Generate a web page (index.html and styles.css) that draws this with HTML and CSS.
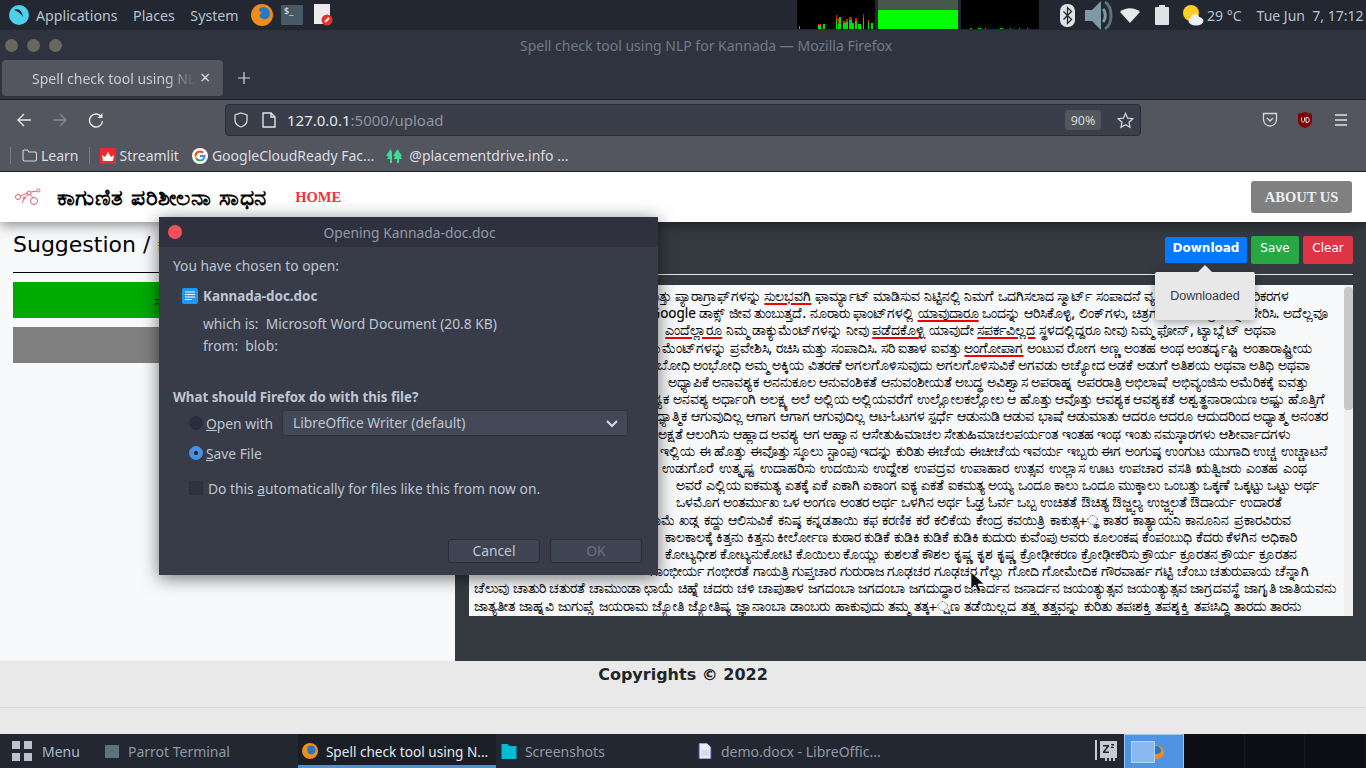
FILE: index.html
```html
<!DOCTYPE html>
<html>
<head>
	<title>Spell check tool using NLP for Kannada</title>
	<link rel="stylesheet" href="styles.css">
</head>
<body>
	<!-- desktop top panel -->
	<div class="top_panel">
		<svg class="os_logo" viewBox="0 0 20 20"><circle cx="10" cy="10" r="10" fill="#4fd0ea"/><path d="M5 5c4-2 8 0 9 7-2-3-4-5-9-7z" fill="#1d2430"/></svg>
		<span class="panel_menu">Applications</span>
		<span class="panel_menu">Places</span>
		<span class="panel_menu">System</span>
		<svg class="launcher" viewBox="0 0 22 22"><circle cx="11" cy="11" r="11" fill="#f08c1a"/><circle cx="12.500" cy="9.500" r="6.500" fill="#2478c8"/><path d="M1 9c1 7 7 10 12 9 3-1 5-3 6-5-3 3-8 3-10 0-1-2 0-3 2-4-2-1-3-2-3-5C5 5 2 6 1 9z" fill="#f08c1a"/></svg>
		<div class="term_icon">$_</div>
		<svg class="doc_icon" viewBox="0 0 20 22"><rect x="0" y="0" width="16" height="20" fill="#ebebeb"/><circle cx="13" cy="16" r="5.500" fill="#e5322d"/><path d="M11 18l4-4" stroke="#fff" stroke-width="2"/></svg>
		<div class="graphs">
			<svg class="graph" viewBox="0 0 78 29">
				<rect width="78" height="29" fill="#000"/>
				<path d="M2 29v-3h1v3zM21 29v-4h3v4zM26 29v-5h2v5zM39 29v-14h1v14zM41 29v-10h1v-2h2v12zM46 29v-6h3v6zM49 29v-7h2v7zM52 29v-9h3v9zM55 29v-6h2v6zM58 29v-8h2v8zM61 29v-5h3v5zM66 29v-14h1v14zM71 29v-8h1v8zM74 29v-6h2v6z" fill="#00e000"/>
				<path d="M21 25v-1h3v1zM39 19v-4h1v4zM41 24v-4h1v4zM46 23v-2h3v2zM49 22v-3h2v3zM52 20v-3h3v3zM58 21v-3h2v3zM66 18v-4h1v4zM71 22v-2h1v2z" fill="#e01010"/>
			</svg>
			<div class="graph mem_graph"></div>
			<svg class="graph" viewBox="0 0 78 29">
				<rect width="78" height="29" fill="#000"/>
				<path d="M9 29v-1h2v1zM17 29v-1h3v1zM24 29v-1h1v1zM39 29v-1h3v1zM49 29v-1h1v1zM58 29v-1h1v1zM66 29v-1h1v1z" fill="#00d000"/>
			</svg>
		</div>
		<svg class="tray_bt" viewBox="0 0 15 23"><rect width="15" height="23" rx="7" fill="#dfe3e6"/><path d="M3.500 7.500l8 8-4 4V3.500l4 4-8 8" fill="none" stroke="#222731" stroke-width="1.300"/></svg>
		<svg class="tray_vol" viewBox="0 0 29 31"><path d="M0 10h7l9-9v29l-9-9H0z" fill="#7f98a5"/><path d="M18 9c3 3 3 10 0 13" fill="none" stroke="#7f98a5" stroke-width="3"/><path d="M20 2c8 5 8 22 0 27" fill="none" stroke="#5e717c" stroke-width="3"/></svg>
		<svg class="tray_wifi" viewBox="0 0 20 15"><path d="M0 4c5-5 15-5 20 0L10 15z" fill="#e6e9eb"/></svg>
		<svg class="tray_bat" viewBox="0 0 14 20"><rect x="4" y="0" width="6" height="2" fill="#dfe3e6"/><rect x="0" y="2" width="14" height="18" rx="1" fill="#dfe3e6"/></svg>
		<svg class="tray_sun" viewBox="0 0 22 22"><circle cx="9" cy="9" r="8" fill="#fbcf24"/><ellipse cx="14" cy="17" rx="7.500" ry="4.500" fill="#eceff1"/><circle cx="13" cy="14" r="4" fill="#eceff1"/></svg>
		<span class="panel_temp">29 °C</span>
		<span class="panel_clock">Tue Jun&nbsp; 7, 17:12</span>
	</div>

	<!-- firefox chrome -->
	<div class="title_bar">
		<span class="win_dot"></span><span class="win_dot"></span><span class="win_dot"></span>
		<span class="title_text">Spell check tool using NLP for Kannada — Mozilla Firefox</span>
	</div>
	<div class="tab_row">
		<div class="tab"><span class="tab_text">Spell check tool using NLP for Kannada</span><span class="tab_close">×</span></div>
		<svg class="new_tab" viewBox="0 0 12 12"><path d="M6 0v12M0 6h12" stroke="#d5d7db" stroke-width="1.200"/></svg>
	</div>
	<div class="nav_row">
		<svg class="nav_icon" viewBox="0 0 16 16"><path d="M15 8H2M8 2L2 8l6 6" fill="none" stroke="#e2e4e8" stroke-width="1.400"/></svg>
		<svg class="nav_icon dim" viewBox="0 0 16 16"><path d="M1 8h13M8 2l6 6-6 6" fill="none" stroke="#8a8c95" stroke-width="1.400"/></svg>
		<svg class="nav_icon" viewBox="0 0 16 16"><path d="M13.500 5A6.500 6.500 0 1 0 14.500 9" fill="none" stroke="#e2e4e8" stroke-width="1.500"/><path d="M14.500 1v5h-5z" fill="#e2e4e8"/></svg>
		<div class="url_bar">
			<svg class="url_icon" viewBox="0 0 16 16"><path d="M8 1l6 2v5c0 4-3 6-6 7-3-1-6-3-6-7V3z" fill="none" stroke="#d5d7db" stroke-width="1.300"/></svg>
			<svg class="url_icon url_page" viewBox="0 0 14 16"><path d="M1 1h8l4 4v10H1z" fill="none" stroke="#e2e4e8" stroke-width="1.400"/><path d="M9 1v4h4" fill="none" stroke="#e2e4e8" stroke-width="1.400"/></svg>
			<span class="url_host">127.0.0.1</span><span class="url_rest">:5000/upload</span>
			<span class="zoom_chip">90%</span>
			<svg class="url_star" viewBox="0 0 18 18"><path d="M9 1.500l2.300 5 5.400.6-4 3.700 1.100 5.400L9 13.500l-4.800 2.700 1.100-5.400-4-3.700 5.400-.6z" fill="none" stroke="#d5d7db" stroke-width="1.300"/></svg>
		</div>
		<svg class="pocket" viewBox="0 0 16 16"><path d="M1.500 1.500h13v6a6.500 6.500 0 0 1-13 0z" fill="none" stroke="#d5d7db" stroke-width="1.300"/><path d="M5 6l3 3 3-3" fill="none" stroke="#d5d7db" stroke-width="1.300"/></svg>
		<svg class="ublock" viewBox="0 0 14 16"><path d="M7 0l7 2v7c0 3-3 6-7 7-4-1-7-4-7-7V2z" fill="#800000"/><path d="M3.500 5.500v3c0 2 3 2 3 0v-3M8 5.500v5h1c3 0 3-5 0-5z" fill="none" stroke="#eee" stroke-width="1"/></svg>
		<svg class="burger" viewBox="0 0 14 12"><path d="M1 1h12M1 6h12M1 11h12" stroke="#e2e4e8" stroke-width="1.300"/></svg>
	</div>
	<div class="bookmark_row">
		<span class="bm_sep"></span>
		<svg class="bm_folder" viewBox="0 0 15 13"><path d="M1 2.500c0-1 .5-1.500 1.500-1.500h3l1.500 2h6c1 0 1.500.5 1.500 1.500v6c0 1-.5 1.500-1.500 1.500h-10C1.500 12 1 11.500 1 10.500z" fill="none" stroke="#d5d7db" stroke-width="1.100"/></svg>
		<span class="bm_text">Learn</span>
		<span class="bm_sep"></span>
		<svg class="bm_icon" viewBox="0 0 16 16"><rect width="16" height="16" fill="#f0282d"/><path d="M2 7l3 2 3-5 3 5 3-2-1 6H3z" fill="#fff"/></svg>
		<span class="bm_text">Streamlit</span>
		<svg class="bm_icon gap_g" viewBox="0 0 16 16"><circle cx="8" cy="8" r="8" fill="#fff"/><path d="M3.500 8a4.500 4.500 0 0 1 7.500-3.300" fill="none" stroke="#ea4335" stroke-width="2"/><path d="M3.500 8c0 1 .3 1.700.7 2.400" fill="none" stroke="#fbbc05" stroke-width="2"/><path d="M4.200 10.400a4.500 4.500 0 0 0 6.800 1" fill="none" stroke="#34a853" stroke-width="2"/><path d="M11 11.400c1-.8 1.500-2 1.500-3.400H8" fill="none" stroke="#4285f4" stroke-width="2"/></svg>
		<span class="bm_text">GoogleCloudReady Fac...</span>
		<svg class="bm_icon gap_t" viewBox="0 0 16 16"><path d="M4.500 1L0 8h2.500L1 11h3v4h2V4zM11.500 1L7 8h2L8 11h3v4h2v-4h3l-1.500-3H16z" fill="#3ddc97"/></svg>
		<span class="bm_text">@placementdrive.info ...</span>
	</div>

	<!-- the page -->
	<div class="site_page">
		<div class="site_nav">
			<svg class="site_logo" viewBox="0 0 26 18"><g fill="none" stroke="#e0606a" stroke-width="1"><circle cx="3" cy="9" r="2.500"/><circle cx="9" cy="10" r="1"/><circle cx="14" cy="5" r="2"/><circle cx="19" cy="13" r="3.500"/><circle cx="23.500" cy="2.500" r="1.500"/><path d="M5 8l8-3M9 11l4-5M15 6l3 4M16 4l6-1M7 15l2-4"/></g></svg>
			<span class="site_name">ಕಾಗುಣಿತ ಪರಿಶೀಲನಾ ಸಾಧನ</span>
			<span class="home_link">HOME</span>
			<span class="about_btn">ABOUT US</span>
		</div>
		<div class="work_area">
			<div class="left_col">
				<div class="left_head">Suggestion / <span class="orange">ಕನ್ನಡ</span></div>
				<div class="left_bar green">ಸಲಹೆ ಪದಗಳನ್ನು ಆಯ್ಕೆ ಮಾಡಿ</div>
				<div class="left_bar gray"></div>
			</div>
			<div class="right_col">
				<div class="right_head">
					<span class="act_btn act_blue">Download</span>
					<span class="act_btn act_green">Save</span>
					<span class="act_btn act_red">Clear</span>
				</div>
				<div class="text_box">
					<div class="text_lines">
						<div>ಮತ್ತು ಪ್ಯಾರಾಗ್ರಾಫ್‌ಗಳನ್ನು <span class="bad">ಸುಲಭವಗಿ</span> ಫಾರ್ಮ್ಯಾಟ್ ಮಾಡಿಸುವ ನಿಟ್ಟಿನಲ್ಲಿ ನಿಮಗೆ ಒದಗಿಸಲಾದ ಸ್ಮಾರ್ಟ್ ಸಂಪಾದನೆ ವ್ಯವಸ್ಥೆ ಮತ್ತು ಶೈಲಿಯ ಪರಿಕರಗಳ</div>
						<div>Google ಡಾಕ್ಸ್ ಜೀವ ತುಂಬುತ್ತದೆ. ನೂರಾರು ಫಾಂಟ್‌ಗಳಲ್ಲಿ <span class="bad">ಯಾವುದಾರೂ</span> ಒಂದನ್ನು ಆರಿಸಿಕೊಳ್ಳಿ, ಲಿಂಕ್‌ಗಳು, ಚಿತ್ರಗಳು ರೇಖಾಚಿತ್ರಗಳನ್ನು ಸೇರಿಸಿ. ಅದೆಲ್ಲವೂ</div>
						<div><span class="bad">ಎಂದೆಲ್ಲಾರೂ</span> ನಿಮ್ಮ ಡಾಕ್ಯುಮೆಂಟ್‌ಗಳನ್ನು ನೀವು <span class="bad">ಪಡೆದಕೊಳ್ಳಿ</span> ಯಾವುದೇ <span class="bad">ಸಪರ್ಕವಿಲ್ಲದ</span> ಸ್ಥಳದಲ್ಲಿದ್ದರೂ ನೀವು ನಿಮ್ಮ ಫೋನ್, ಟ್ಯಾಬ್ಲೆಟ್ ಅಥವಾ</div>
						<div>ಡಾಕ್ಯುಮೆಂಟ್‌ಗಳನ್ನು ಪ್ರವೇಶಿಸಿ, ರಚಿಸಿ ಮತ್ತು ಸಂಪಾದಿಸಿ. ಸರಿ ಐತಾಳ ಐವತ್ತು <span class="bad">ಅಂಗೋಪಾಗ</span> ಅಂಟುವ ರೋಗ ಅಣ್ಣ ಅಂತಹ ಅಂಥ ಅಂತರ್ದೃಷ್ಟಿ ಅಂತಾರಾಷ್ಟ್ರೀಯ</div>
						<div>ಅಂಬೋಧಿ ಅಂಭೋಧಿ ಅಮ್ಮ ಅಕ್ಕಿಯ ವಿತರಣೆ ಅಗಲಗೊಳಿಸುವುದು ಅಗಲಗೊಳಿಸುವಿಕೆ ಅಗವಡು ಅಚ್ಯೋದ ಅಡಕೆ ಅಡುಗೆ ಅತಿಶಯ ಅಥವಾ ಅತಿಥಿ ಅಥವಾ</div>
						<div>ಅಧ್ಯಾಪಿಕೆ ಅನಾವಶ್ಯಕ ಅನನುಕೂಲ ಆನುವಂಶಿಕತೆ ಆನುವಂಶೀಯತೆ ಅಬದ್ಧ ಅವಿಶ್ವಾಸ ಅಪರಾಹ್ನ ಅಪರರಾತ್ರಿ ಅಭಿಲಾಷೆ ಅಭಿವ್ಯಂಜಿಸು ಅಮೆರಿಕಕ್ಕೆ ಐವತ್ತು</div>
						<div>ಅವಶ್ಯಕ ಅನವಶ್ಯ ಅರ್ಧಾಂಗಿ ಅಲಕ್ಷ್ಯ ಅಲೆ ಅಲ್ಲಿಯ ಅಲ್ಲಿಯವರೆಗೆ ಉಲ್ಲೋಲಕಲ್ಲೋಲ ಆ ಹೊತ್ತು ಆವೊತ್ತು ಆವಶ್ಯಕ ಆವಶ್ಯಕತೆ ಅಶ್ವತ್ಥನಾರಾಯಣ ಅಷ್ಟು ಹೊತ್ತಿಗೆ</div>
						<div>ಆಧ್ಯಾತ್ಮಿಕ ಆಗುವುದಿಲ್ಲ ಆಗಾಗ ಆಗಾಗ ಆಗುವುದಿಲ್ಲ ಆಟ-ಓಟಗಳ ಸ್ಪರ್ಧೆ ಆಡುನುಡಿ ಆಡುವ ಭಾಷೆ ಆಡುಮಾತು ಆದರೂ ಆದರೂ ಆದುದರಿಂದ ಅಧ್ಯಾತ್ಮ ಅನಂತರ</div>
						<div>ಅಕ್ಷತೆ ಆಲಂಗಿಸು ಆಹ್ಲಾದ ಅವಶ್ಯ ಆಗ ಆಹ್ವಾನ ಆಸೇತುಹಿಮಾಚಲ ಸೇತುಹಿಮಾಚಲಪರ್ಯಂತ ಇಂತಹ ಇಂಥ ಇಂತು ನಮಸ್ಕಾರಗಳು ಆಶೀರ್ವಾದಗಳು</div>
						<div>ಇಲ್ಲಿಯ ಈ ಹೊತ್ತು ಈವೊತ್ತು ಸ್ಕೂಲು ಸ್ಟಾಂಪು ಇದನ್ನು ಕುರಿತು ಈಚೆಯ ಈಚೀಚೆಯ ಇವರ್ಯ ಇಬ್ಬರು ಈಗ ಅಂಗುಷ್ಠ ಉಂಗುಟ ಯುಗಾದಿ ಉಚ್ಚ ಉಚ್ಚಾಟನೆ</div>
						<div>ಉಡುಗೊರೆ ಉತ್ಕೃಷ್ಟ ಉದಾಹರಿಸು ಉದಯಿಸು ಉದ್ದೇಶ ಉಪದ್ರವ ಉಪಾಹಾರ ಉತ್ಸವ ಉಲ್ಲಾಸ ಊಟ ಉಪಚಾರ ವಸತಿ ಋತ್ವಿಜರು ಎಂತಹ ಎಂಥ</div>
						<div>ಅವರೆ ಎಲ್ಲಿಯ ಐಕಮತ್ಯ ಏತಕ್ಕೆ ಏಕೆ ಏಕಾಗಿ ಏಕಾಂಗ ಐಕ್ಯ ಏಕತೆ ಐಕಮತ್ಯ ಅಯ್ಯ ಒಂದೂ ಕಾಲು ಒಂದೂ ಮುಕ್ಕಾಲು ಒಂಬತ್ತು ಒಕ್ಕಣೆ ಒಕ್ಕಟ್ಟು ಒಟ್ಟು ಅರ್ಥ</div>
						<div>ಒಳಮೊಗ ಅಂತರ್ಮುಖ ಒಳ ಅಂಗಣ ಅಂತರ ಅರ್ಥ ಒಳಗಿನ ಅರ್ಥ ಓಢ್ರ ಓರ್ವ ಒಬ್ಬ ಉಚಿತತೆ ಔಚಿತ್ಯ ಔಜ್ಜ್ವಲ್ಯ ಉಜ್ಜ್ವಲತೆ ಔದಾರ್ಯ ಉದಾರತೆ</div>
						<div>ಕರಾಮೆ ಖಡ್ಗ ಕದ್ದು ಆಲಿಸುವಿಕೆ ಕನಿಷ್ಠ ಕನ್ನಡತಾಯಿ ಕಫ ಕರಣಿಕ ಕರೆ ಕಲಿಕೆಯ ಕೇಂದ್ರ ಕವಯಿತ್ರಿ ಕಾಕುತ್ಸ+್ಥ ಕಾತರ ಕಾತ್ಯಾಯನಿ ಕಾನೂನಿನ ಪ್ರಕಾರವಿರುವ</div>
						<div>ಕಾಲಕಾಲಕ್ಕೆ ಕಿತ್ತನು ಕಿತ್ತನು ಕೀರ್ಲೋಣ ಕುಠಾರ ಕುಡಿಕೆ ಕುಡಿಕಿ ಕುಡಿಕೆ ಕುಡಿಕಿ ಕುದುರು ಕುವೆಂಪು ಅವರು ಕೂಲಂಕಷ ಕೆಂಪಂಬುಧಿ ಕೆದರು ಕೆಳಗಿನ ಅಧಿಕಾರಿ</div>
						<div>ಕೋಟ್ಯಧೀಶ ಕೋಟ್ಯನುಕೋಟಿ ಕೊಯಿಲು ಕೊಯ್ಲು ಕುಶಲತೆ ಕೌಶಲ ಕೃಷ್ಣ ಕೃಶ ಕೃಷ್ಣ ಕ್ರೋಢೀಕರಣ ಕ್ರೋಢೀಕರಿಸು ಕ್ರೌರ್ಯ ಕ್ರೂರತನ ಕ್ರೌರ್ಯ ಕ್ರೂರತನ</div>
						<div>ಗಾಂಭೀರ್ಯ ಗಂಭೀರತೆ ಗಾಯತ್ರಿ ಗುಪ್ತಚಾರ ಗುರುರಾಜ ಗೂಢಚರ ಗೂಢಚರ ಗೆಲ್ಲು ಗೋದಿ ಗೋಮೇದಿಕ ಗೌರವಾರ್ಹ ಗಟ್ಟಿ ಚೆಂಬು ಚತುರುಪಾಯ ಚೆನ್ನಾಗಿ</div>
						<div>ಚೆಲುವು ಚಾತುರಿ ಚತುರತೆ ಚಾಮುಂಡಾ ಛಾಯೆ ಚಿಹ್ನೆ ಚದರು ಚಳಿ ಚಾಪುತಾಳ ಜಗದಂಬಾ ಜಗದಂಬಾ ಜಗದುದ್ಧಾರ ಜನಾರ್ದನ ಜನಾರ್ದನ ಜಯಂತ್ಯುತ್ಸವ ಜಯಂತ್ಯುತ್ಸವ ಜಾಗ್ರದವಸ್ಥೆ ಜಾಗೃತಿ ಜಾತಿಯವನು</div>
						<div>ಜಾತ್ಯತೀತ ಜಾಹ್ನವಿ ಜುಗುಪ್ಸೆ ಜಯರಾಮ ಜ್ಯೋತಿ ಜ್ಯೋತಿಷ್ಯ ಜ್ಞಾನಾಂಬಾ ಡಾಂಬರು ಹಾಕುವುದು ತಮ್ಮ ತತ್ಕ+್ಷಣ ತಡೆಯಿಲ್ಲದ ತತ್ತ್ವ ತತ್ತ್ವವನ್ನು ಕುರಿತು ತಪಃಶಕ್ತಿ ತಪಶ್ಶಕ್ತಿ ತಪಃಸಿದ್ಧಿ ತಾರದು ತಾರನು</div>
					</div>
					<div class="scroll_track"><div class="scroll_thumb"></div></div>
				</div>
			</div>
		</div>
		<div class="site_foot">
			<div class="foot_text">Copyrights © 2022</div>
			<div class="foot_rule"></div>
		</div>
	</div>

	<!-- desktop task bar -->
	<div class="task_bar">
		<svg class="menu_grid" viewBox="0 0 20 20"><path d="M0 0h8v8H0zM12 0h8v8h-8zM0 12h8v8H0zM12 12h8v8h-8z" fill="#b9c2cf"/></svg>
		<span class="menu_word">Menu</span>
		<div class="task task_term"><span class="term_small"></span><span>Parrot Terminal</span></div>
		<div class="task task_active">
			<svg class="task_icon" viewBox="0 0 16 16"><circle cx="8" cy="8" r="8" fill="#f08c1a"/><circle cx="9" cy="7" r="4.500" fill="#2478c8"/><path d="M1 4l4 1 1 5 4 2-5 3-4-4z" fill="#f08c1a"/></svg>
			<span>Spell check tool using N...</span>
		</div>
		<div class="task task_files">
			<svg class="task_icon" viewBox="0 0 15 16"><path d="M0 1h6l2 2h7v13H0z" fill="#00bcd4"/></svg>
			<span>Screenshots</span>
		</div>
		<div class="task task_writer">
			<svg class="task_icon" viewBox="0 0 12 16"><path d="M0 0h8l4 4v12H0z" fill="#e8edf5" stroke="#3f51b5"/><path d="M2 8h8M2 10h8M2 12h8" stroke="#bfc8d8"/></svg>
			<span>demo.docx - LibreOffic...</span>
		</div>
		<svg class="sleep_icon" viewBox="0 0 24 26"><path d="M1 2h2v20H1zM6 3h17v17h-2v3h-2v-3h-2v3h-2v-3h-2v3h-2v-3H6z" fill="#c8ccd2"/><path d="M9 7h6v1.500l-4 5h4V15H9v-1.500l4-5H9zM17 6h3v1l-2 2h2v1h-3V9l2-2h-2z" fill="#20252e"/></svg>
		<div class="workspace"><span class="ws_window"></span><svg class="ws_fox" viewBox="0 0 10 14"><path d="M0 0c6 0 9 4 9 8 0 3-4 6-9 6z" fill="#f08c1a"/><path d="M0 1c4 0 6 2 6 5 0 2-2 3-6 3z" fill="#2478c8"/></svg></div>
		<div class="ws_rest"><span></span><span></span><span></span></div>
	</div>

	<!-- download dialog and tooltip lie over the page -->
	<div class="dialog">
		<div class="dlg_title"><span class="dlg_close"></span>Opening Kannada-doc.doc</div>
		<div class="dlg_body">
			<div class="dlg_line dlg_chosen">You have chosen to open:</div>
			<div class="dlg_file">
				<svg class="dlg_file_icon" viewBox="0 0 16 16"><rect width="16" height="16" rx="2" fill="#2196f3"/><path d="M3 4h10M3 6.500h10M3 9h10M3 11.500h7" stroke="#fff"/></svg>
				<b>Kannada-doc.doc</b>
			</div>
			<div class="dlg_info">which is:&nbsp; Microsoft Word Document (20.8 KB)</div>
			<div class="dlg_info">from:&nbsp; blob:</div>
			<div class="dlg_question">What should Firefox do with this file?</div>
			<div class="dlg_option dlg_first">
				<span class="radio"></span><span class="opt_label"><u>O</u>pen with</span>
				<div class="select_box">LibreOffice Writer (default)<svg class="select_arrow" viewBox="0 0 12 8"><path d="M1 1l5 5 5-5" fill="none" stroke="#d5dae2" stroke-width="2"/></svg></div>
			</div>
			<div class="dlg_option">
				<span class="radio radio_on"></span><span class="opt_label"><u>S</u>ave File</span>
			</div>
			<div class="dlg_option dlg_check">
				<span class="check"></span><span class="check_label">Do this <u>a</u>utomatically for files like this from now on.</span>
			</div>
			<div class="dlg_buttons">
				<span class="dlg_btn">Cancel</span>
				<span class="dlg_btn dlg_ok">OK</span>
			</div>
		</div>
	</div>
	<div class="popover">Downloaded</div>
	<svg class="cursor" viewBox="0 0 14 20"><path d="M0 0l13 12H7l3 7-3 1-3-7-4 4z" fill="#111" stroke="#fff" stroke-width=".6"/></svg>
</body>
</html>
```
FILE: styles.css
```css
html, body
{
	margin:0;
	padding:0;
	height:768px;
	overflow:hidden;
}
body
{
	font-family:"Noto Sans",sans-serif;
	font-size:14px;
	background:#222731;
	position:relative;
}
svg
{
	display:block;
	flex:none;
}
/*=============== top panel ===============*/
.top_panel
{
	height:30px;
	background:#222731;
	display:flex;
	align-items:center;
	color:#b7c3d0;
	padding-left:9px;
	font-size:14.200px;
}
.os_logo
{
	width:20px;
	height:20px;
	margin-right:7px;
}
.panel_menu
{
	margin-right:15.500px;
}
.launcher
{
	width:22px;
	height:22px;
	margin-left:-3px;
}
.term_icon
{
	width:22px;
	height:20px;
	margin-left:8px;
	background:#455a64;
	color:#e8e8e8;
	font-size:9px;
	line-height:12px;
	padding-left:3px;
	box-sizing:border-box;
	border-radius:1px;
}
.doc_icon
{
	width:20px;
	height:22px;
	margin-left:11px;
}
.graphs
{
	display:flex;
	gap:3px;
	margin-left:463px;
	height:29px;
	align-self:flex-start;
}
.graph
{
	width:78px;
	height:29px;
}
.mem_graph
{
	width:80px;
	background:linear-gradient(#46584a 10px,#00ff00 10px);
}
.tray_bt
{
	width:15px;
	height:23px;
	margin-left:21px;
}
.tray_vol
{
	width:29px;
	height:31px;
	margin-left:10px;
}
.tray_wifi
{
	width:20px;
	height:15px;
	margin-left:6px;
}
.tray_bat
{
	width:14px;
	height:20px;
	margin-left:15px;
}
.tray_sun
{
	width:22px;
	height:22px;
	margin-left:13px;
}
.panel_temp
{
	margin-left:3px;
	font-size:14px;
}
.panel_clock
{
	margin-left:15px;
	white-space:nowrap;
	font-size:14px;
}
/*=============== firefox chrome ===============*/
.title_bar
{
	height:30px;
	background:#2f333f;
	display:flex;
	align-items:center;
	padding-left:5px;
	gap:9px;
	position:relative;
}
.win_dot
{
	width:13px;
	height:13px;
	border-radius:50%;
	background:#68685f;
}
.title_text
{
	color:#6f7b89;
	font-size:14px;
	margin-left:449px;
	white-space:nowrap;
}
.tab_row
{
	height:39px;
	background:#2f333f;
	border-bottom:1px solid #1c1f27;
	display:flex;
	align-items:flex-start;
	padding-left:2px;
}
.tab
{
	width:221px;
	height:36px;
	background:#53555f;
	border-radius:4px;
	display:flex;
	align-items:center;
	box-sizing:border-box;
	padding-left:30px;
	color:#c9ccd2;
	position:relative;
	overflow:hidden;
}
.tab_text
{
	width:164px;
	overflow:hidden;
	white-space:nowrap;
	-webkit-mask-image:linear-gradient(90deg,#000 135px,transparent 164px);
}
.tab_close
{
	position:absolute;
	left:198px;
	top:5px;
	font-size:18px;
	line-height:24px;
	color:#d5d7db;
}
.new_tab
{
	width:12px;
	height:12px;
	margin:12px 0 0 15px;
}
.nav_row
{
	height:40px;
	background:#53555f;
	display:flex;
	align-items:center;
}
.nav_icon
{
	width:16px;
	height:16px;
	margin-left:16px;
	margin-right:4px;
}
.url_bar
{
	width:916px;
	height:32px;
	margin-left:117px;
	box-sizing:border-box;
	background:#3a3e4a;
	border:1px solid #2a2d36;
	border-radius:4px;
	display:flex;
	align-items:center;
	font-size:15px;
}
.url_icon
{
	width:16px;
	height:16px;
	margin-left:7px;
}
.url_icon.url_page
{
	width:14px;
	margin-left:13px;
	margin-right:11px;
}
.url_host
{
	color:#e4e6ea;
}
.url_rest
{
	color:#8f939c;
}
.zoom_chip
{
	margin-left:auto;
	width:36px;
	height:20px;
	background:#52565f;
	border-radius:3px;
	color:#d5d7db;
	font-size:12.500px;
	line-height:21px;
	text-align:center;
}
.url_star
{
	width:17px;
	height:17px;
	margin:0 6px 0 16px;
}
.pocket
{
	width:16px;
	height:16px;
	margin-left:121px;
}
.ublock
{
	width:14px;
	height:16px;
	margin-left:20px;
}
.burger
{
	width:14px;
	height:12px;
	margin-left:22px;
}
.bookmark_row
{
	height:31px;
	background:#53555f;
	border-bottom:1px solid #1c1f27;
	display:flex;
	align-items:center;
	color:#dcdee2;
	padding-left:10px;
	white-space:nowrap;
}
.bm_sep
{
	width:1px;
	height:17px;
	background:#7a7c84;
}
.bm_folder
{
	width:15px;
	height:13px;
	margin-left:11px;
	margin-right:4px;
}
.bm_text
{
	margin-right:10px;
}
.bm_icon
{
	width:16px;
	height:16px;
	margin-right:4px;
}
.bookmark_row .bm_sep + .bm_icon
{
	margin-left:10px;
}
.gap_g
{
	margin-left:3px;
}
.gap_t
{
	margin-left:2px;
	margin-right:7px;
}
/*=============== page ===============*/
.site_page
{
	height:562px;
	overflow:hidden;
	background:#f8f9fb;
	display:flex;
	flex-direction:column;
}
.site_nav
{
	height:50px;
	flex:none;
	background:#fff;
	display:flex;
	align-items:center;
	box-shadow:0 3px 12px rgba(0,0,0,0.45);
	position:relative;
	padding-left:15px;
}
.site_logo
{
	width:26px;
	height:18px;
}
.site_name
{
	font-family:"DejaVu Sans",sans-serif;
	font-weight:bold;
	font-size:22px;
	letter-spacing:0.350px;
	color:#000;
	margin-left:16px;
	white-space:nowrap;
}
.home_link
{
	font-family:"Liberation Serif",serif;
	font-weight:bold;
	font-size:14.500px;
	color:#f0323c;
	margin-left:29px;
}
.about_btn
{
	margin-left:auto;
	margin-right:14px;
	width:101px;
	height:32px;
	background:#808080;
	color:#eee;
	font-family:"Liberation Serif",serif;
	font-weight:bold;
	font-size:14.500px;
	line-height:32px;
	text-align:center;
	border-radius:3px;
}
.work_area
{
	height:439px;
	flex:none;
	display:flex;
}
.left_col
{
	width:455px;
	flex:none;
	box-sizing:border-box;
	padding:8px 13px 0 13px;
}
.left_head
{
	font-family:"DejaVu Sans",sans-serif;
	font-size:22px;
	line-height:30px;
	height:42px;
	border-bottom:1px solid #000;
	color:#000;
}
.orange
{
	color:#e08a10;
}
.left_bar
{
	height:36px;
	margin-top:9px;
	text-align:center;
	line-height:36px;
	color:#000;
	font-size:15px;
	white-space:nowrap;
}
.left_bar.green
{
	background:#00aa00;
}
.left_bar.gray
{
	background:#808080;
}
.right_col
{
	flex:1;
	background:#343a40;
	box-sizing:border-box;
	padding:14px 13px 0 14px;
}
.right_head
{
	height:38px;
	display:flex;
	justify-content:flex-end;
	gap:4px;
	border-bottom:1px solid #e8e8e8;
	align-items:flex-start;
}
.act_btn
{
	height:28px;
	line-height:24px;
	font-family:"DejaVu Sans",sans-serif;
	font-size:12px;
	color:#fff;
	text-align:center;
	border-radius:2px;
}
.act_blue
{
	width:82px;
	height:26px;
	line-height:22px;
	margin-top:1px;
	background:#007bff;
	font-weight:bold;
}
.act_green
{
	width:48px;
	background:#28a745;
}
.act_red
{
	width:50px;
	background:#dc3545;
}
.text_box
{
	margin-top:10px;
	height:331px;
	background:#f8f9fb;
	display:flex;
	overflow:hidden;
	position:relative;
}
.text_lines
{
	flex:1;
	padding:3px 0 0 5px;
	font-size:13.500px;
	line-height:17.200px;
	color:#000;
	white-space:nowrap;
	overflow:hidden;
	-webkit-text-stroke:0.15px #000;
}
.text_lines div
{
	text-align:right;
}
/* each line ends where the wrapped text ended, the start lies under the dialog */
.text_lines div:nth-child(1){width:815px}
.text_lines div:nth-child(2){width:854px}
.text_lines div:nth-child(3){width:802px}
.text_lines div:nth-child(4){width:838px}
.text_lines div:nth-child(5){width:836px}
.text_lines div:nth-child(6){width:834px}
.text_lines div:nth-child(7){width:851px}
.text_lines div:nth-child(8){width:854px}
.text_lines div:nth-child(9){width:816px}
.text_lines div:nth-child(10){width:854px}
.text_lines div:nth-child(11){width:833px;word-spacing:1.400px}
.text_lines div:nth-child(12){width:845px}
.text_lines div:nth-child(13){width:808px}
.text_lines div:nth-child(14){width:817px;word-spacing:1px}
.text_lines div:nth-child(15){width:823px}
.text_lines div:nth-child(16){width:823px}
.text_lines div:nth-child(17){width:835px}
.text_lines div:nth-child(18){text-align:left}
.text_lines div:nth-child(19){text-align:left;word-spacing:0.700px}
.bad
{
	text-decoration:underline #f00000 2px;
	text-underline-offset:2px;
}
.scroll_track
{
	width:9px;
	background:#f0f0ee;
	padding:2px 0;
	box-sizing:border-box;
}
.scroll_thumb
{
	height:123px;
	background:#c8c8c8;
	border-radius:4px;
}
.site_foot
{
	height:73px;
	background:#e9e9e9;
	flex:none;
}
.foot_text
{
	font-family:"DejaVu Sans",sans-serif;
	font-weight:bold;
	font-size:16px;
	line-height:28px;
	text-align:center;
	color:#212529;
	height:46px;
}
.foot_rule
{
	height:1px;
	background:#d6d6d6;
}
/*=============== task bar ===============*/
.task_bar
{
	height:34px;
	background:#222731;
	display:flex;
	align-items:center;
	color:#8f9aa8;
	padding-left:12px;
	white-space:nowrap;
}
.menu_grid
{
	width:20px;
	height:20px;
}
.menu_word
{
	margin-left:10px;
	color:#a8b8cc;
}
.task
{
	display:flex;
	align-items:center;
	height:34px;
	box-sizing:border-box;
}
.task_term
{
	width:193px;
	margin-left:25px;
}
.term_small
{
	width:14px;
	height:13px;
	background:#5d7480;
	margin-right:9px;
}
.task_active
{
	width:198px;
	background:#1a1e26;
	border-bottom:3px solid #4a90e2;
	color:#e4e8ee;
	padding:3px 0 0 4px;
	font-size:13.600px;
}
.task_icon
{
	width:16px;
	height:16px;
	margin-right:8px;
}
.task_files
{
	width:201px;
	padding-left:5px;
}
.task_writer
{
	width:397px;
}
.sleep_icon
{
	width:24px;
	height:26px;
}
.workspace
{
	width:60px;
	height:34px;
	margin-left:6px;
	background:#4f94e3;
	border:1px solid #9cc8f0;
	border-bottom:0;
	box-sizing:border-box;
	display:flex;
	align-items:center;
	padding-left:6px;
	position:relative;
}
.ws_window
{
	width:22px;
	height:20px;
	background:#8ab8f0;
	border:1px solid #b4d2f4;
}
.ws_fox
{
	width:10px;
	height:14px;
}
.ws_rest
{
	flex:1;
	height:34px;
	background:#0d0f14;
	display:flex;
}
.ws_rest span
{
	flex:1;
	border-right:1px solid #15181e;
}
/*=============== over the page ===============*/
.dialog
{
	position:absolute;
	left:159px;
	top:217px;
	width:499px;
	height:358px;
	background:#383b48;
	color:#bdc6d2;
	font-size:13.800px;
	box-shadow:0 3px 18px rgba(0,0,0,0.55);
	border-radius:2px 2px 0 0;
}
.dlg_title
{
	height:30px;
	background:#2f323e;
	color:#8f99a7;
	line-height:31px;
	text-align:center;
	position:relative;
	padding-left:2px;
}
.dlg_close
{
	position:absolute;
	left:9px;
	top:8px;
	width:14px;
	height:14px;
	border-radius:50%;
	background:#f4505a;
}
.dlg_body
{
	padding:9px 16px 0 14px;
}
.dlg_line
{
	line-height:20px;
}
.dlg_file
{
	display:flex;
	align-items:center;
	margin:10px 0 0 9px;
	height:20px;
	font-size:13.400px;
}
.dlg_file_icon
{
	width:16px;
	height:16px;
	margin-right:5px;
}
.dlg_info
{
	margin-left:30px;
	line-height:22px;
}
.dlg_file + .dlg_info
{
	margin-top:7px;
}
.dlg_question
{
	font-weight:bold;
	font-size:13.300px;
	margin-top:30px;
	line-height:20px;
}
.dlg_option
{
	display:flex;
	align-items:center;
	height:26px;
	margin:4px 0 0 16px;
}
.dlg_option.dlg_first
{
	margin-top:3px;
}
.radio
{
	width:14px;
	height:14px;
	border-radius:50%;
	background:#2a2e3a;
	border:1px solid #2a2e3a;
	box-sizing:border-box;
	margin-right:3px;
}
.radio_on
{
	background:#4a90e2;
	border-color:#4a90e2;
	position:relative;
}
.radio_on:after
{
	content:"";
	position:absolute;
	left:4px;
	top:4px;
	width:4px;
	height:4px;
	border-radius:50%;
	background:#222;
}
.opt_label
{
	width:76px;
}
.select_box
{
	width:346px;
	height:26px;
	box-sizing:border-box;
	background:#434856;
	border:1px solid #2f323e;
	border-radius:3px;
	line-height:24px;
	padding-left:10px;
	position:relative;
}
.select_arrow
{
	position:absolute;
	right:9px;
	top:9px;
	width:12px;
	height:8px;
}
.dlg_option.dlg_check
{
	margin-top:9px;
}
.check
{
	width:14px;
	height:14px;
	background:#2f323e;
	border:1px solid #2a2e3a;
	border-radius:2px;
	box-sizing:border-box;
	margin-right:5px;
}
.dlg_buttons
{
	display:flex;
	justify-content:flex-end;
	gap:10px;
	margin-top:38px;
}
.dlg_btn
{
	width:92px;
	height:24px;
	box-sizing:border-box;
	background:#3f4452;
	border:1px solid #2a2d38;
	border-radius:3px;
	line-height:22px;
	text-align:center;
}
.dlg_ok
{
	color:#6a7280;
}
.popover
{
	position:absolute;
	left:1155px;
	top:272px;
	width:100px;
	height:48px;
	background:#e8e8e8;
	border-radius:2px;
	box-shadow:0 2px 10px rgba(0,0,0,0.4);
	font-family:"Liberation Sans",sans-serif;
	font-size:12.500px;
	color:#343a40;
	line-height:48px;
	text-align:center;
}
.popover:before
{
	content:"";
	position:absolute;
	left:43px;
	top:-7px;
	border-left:7px solid transparent;
	border-right:7px solid transparent;
	border-bottom:7px solid #e8e8e8;
}
.cursor
{
	position:absolute;
	left:971px;
	top:572px;
	width:14px;
	height:20px;
}
```
